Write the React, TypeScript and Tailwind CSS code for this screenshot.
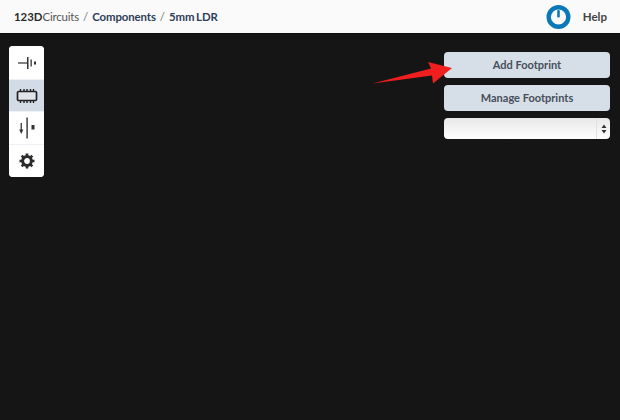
import React from 'react';

const ToolButton = ({ active, className, children }: { active?: boolean; className: string; children: React.ReactNode }) => (
    <div className={`${className} flex items-center justify-center border-b border-[#eef1f5] last:border-b-0 ${active ? 'bg-[#d3dce6]' : 'bg-white'}`}>
        {children}
    </div>
);

const PowerLogo = () => (
    <svg width="26" height="26" viewBox="0 0 26 26">
        <circle cx="12.5" cy="13" r="9.8" fill="none" stroke="#0a78b8" strokeWidth="4.4" />
        <rect x="11.2" y="6" width="2.6" height="7.5" rx="1" fill="#0a78b8" />
    </svg>
);

export default function App() {
    return (
        <div className="w-[620px] h-[420px] overflow-hidden flex flex-col bg-[#151515] font-['Lato','Open_Sans',sans-serif]">
            {/* Top bar */}
            <header className="h-[34px] bg-[#fafafa] flex items-center justify-between pl-[14px] pr-[13px] border-b border-[#0d0d12]">
                <div className="text-[11.4px] font-bold text-[#3a4658] flex items-center">
                    <span className="text-[#2a2a2a]">123D</span>
                    <span className="font-normal text-[#555] tracking-[-0.15px]">Circuits</span>
                    <span className="font-normal text-[#777] mx-[4px]">/</span>
                    <span className="text-[#2f4059] tracking-[-0.1px]">Components</span>
                    <span className="font-normal text-[#777] mx-[4px]">/</span>
                    <span className="text-[#2f4059] tracking-[-0.1px] [word-spacing:-1px]">5mm LDR</span>
                </div>
                <div className="flex items-center gap-[11px]">
                    <PowerLogo />
                    <span className="text-[11.5px] font-bold text-[#444]">Help</span>
                </div>
            </header>

            <main className="flex-1 flex justify-between items-start pl-[9px] pr-[10px] pt-[12px] relative">
                {/* Tools */}
                <div className="w-[35px] rounded-[4px] overflow-hidden bg-white">
                    <ToolButton className="h-[34px]">
                        <svg width="20" height="14" viewBox="0 0 20 14" fill="#333">
                            <rect x="1" y="6.4" width="9" height="1.2" />
                            <rect x="10" y="1" width="1.5" height="12" />
                            <rect x="13.5" y="3.5" width="1.3" height="7" />
                            <rect x="17" y="5.5" width="2" height="3" />
                        </svg>
                    </ToolButton>
                    <ToolButton active className="h-[32px]">
                        <svg width="22" height="14" viewBox="0 0 22 14">
                            <rect x="1.5" y="2.5" width="19" height="9" rx="1.2" fill="#dfe4ea" stroke="#222" strokeWidth="1.7" />
                            <path d="M4.5 0v2.5M8 0v2.5M11 0v2.5M14.5 0v2.5M17.5 0v2.5M4.5 11.5v2.5M8 11.5v2.5M11 11.5v2.5M14.5 11.5v2.5M17.5 11.5v2.5" stroke="#222" strokeWidth="1.4" />
                        </svg>
                    </ToolButton>
                    <ToolButton className="h-[33px]">
                        <svg width="18" height="22" viewBox="0 0 18 22" fill="#333">
                            <rect x="2.6" y="6" width="1.3" height="8" />
                            <path d="M1.2 12.5h4.1l-2 4.5z" />
                            <rect x="8.4" y="0.5" width="1.4" height="21" />
                            <rect x="13.5" y="8" width="3" height="4.5" />
                        </svg>
                    </ToolButton>
                    <ToolButton className="h-[32px]">
                        <svg width="16" height="16" viewBox="0 0 16 16">
                            <circle cx="8" cy="8" r="4.4" fill="none" stroke="#2b2b2b" strokeWidth="3" />
                            <path d="M8 0.5v3M8 12.5v3M0.5 8h3M12.5 8h3M2.7 2.7l2.1 2.1M11.2 11.2l2.1 2.1M13.3 2.7l-2.1 2.1M4.8 11.2l-2.1 2.1" stroke="#2b2b2b" strokeWidth="2.6" />
                        </svg>
                    </ToolButton>
                </div>

                {/* Footprint actions */}
                <div className="w-[166px] mt-[6px] flex flex-col gap-[7px]">
                    <button className="h-[26px] rounded-[4px] bg-[#d6dee7] text-[11px] font-bold text-[#474f5b]">Add Footprint</button>
                    <button className="h-[26px] rounded-[4px] bg-[#d6dee7] text-[11px] font-bold text-[#474f5b]">Manage Footprints</button>
                    <div className="h-[21px] rounded-[4px] bg-gradient-to-b from-[#e8e8e8] to-white flex justify-end items-center">
                        <div className="w-[14px] h-full border-l border-[#e2e2e2] flex items-center justify-center">
                            <svg width="6" height="10" viewBox="0 0 6 10" fill="#333">
                                <path d="M3 0.5L5.5 4h-5zM3 9.5L0.5 6h5z" />
                            </svg>
                        </div>
                    </div>
                </div>

                {/* Annotation arrow */}
                <svg className="absolute left-[372px] top-[26px]" width="82" height="26" viewBox="0 0 82 26">
                    <path d="M0.5 23.5L59 8.5L56 2L80 8L61 23.5L60 15.5Z" fill="#f01e1e" />
                </svg>
            </main>
        </div>
    );
}
